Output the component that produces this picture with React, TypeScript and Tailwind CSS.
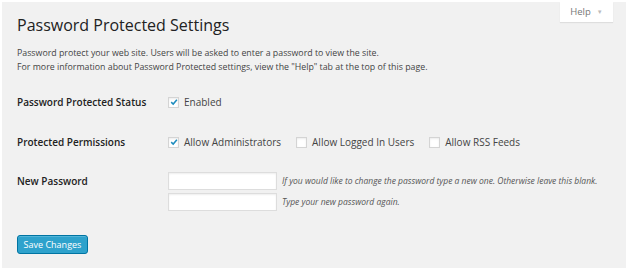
import { FC } from "react";

const Check: FC<{ checked?: boolean; label: string }> = ({ checked, label }) => (
  <label className="flex items-center gap-[5px]">
    <span className="w-[11px] h-[11px] bg-white border border-[#d4d4d4] shadow-[inset_0_1px_2px_rgba(0,0,0,0.08)] flex items-center justify-center">
      {checked && (
        <svg width="8" height="8" viewBox="0 0 10 10">
          <path d="M1.5 5.2 L4 7.6 L8.6 2.2" fill="none" stroke="#1e8cbe" strokeWidth="1.9" />
        </svg>
      )}
    </span>
    <span className="text-[10px] text-[#444]">{label}</span>
  </label>
);

const App: FC = () => {
  return (
    <div className="w-[628px] h-[272px] bg-white p-[2px] font-['Open_Sans',sans-serif]">
      <div className="relative h-[266px] w-[624px] bg-[#f1f1f1] pl-[15px] pt-[12px]">
        <div className="absolute top-0 right-[13px] w-[53px] h-[20px] bg-white shadow-[0_1px_1px_rgba(0,0,0,0.08)] flex items-center justify-center gap-[6px] text-[9.5px] text-[#777]">
          Help <span className="text-[6px] text-[#bbb]">▼</span>
        </div>
        <h1 className="text-[16px] leading-[22px] text-[#222]">Password Protected Settings</h1>
        <div className="mt-[10px] text-[8.8px] leading-[14px] text-[#444]">
          <p>Password protect your web site. Users will be asked to enter a password to view the site.</p>
          <p>For more information about Password Protected settings, view the "Help" tab at the top of this page.</p>
        </div>
        <div className="mt-[19px] flex flex-col">
          <div className="flex items-center h-[18px]">
            <div className="w-[151px] text-[10px] font-semibold text-[#222]">Password Protected Status</div>
            <Check checked label="Enabled" />
          </div>
          <div className="mt-[22px] flex items-center h-[18px] gap-[15px]">
            <div className="w-[136px] text-[10px] font-semibold text-[#222]">Protected Permissions</div>
            <Check checked label="Allow Administrators" />
            <Check label="Allow Logged In Users" />
            <Check label="Allow RSS Feeds" />
          </div>
          <div className="mt-[21px] flex">
            <div className="w-[151px] text-[10px] font-semibold text-[#222] leading-[18px]">New Password</div>
            <div className="flex flex-col gap-[3px]">
              <div className="flex items-center gap-[5px]">
                <input className="w-[109px] h-[18px] bg-white border border-[#ddd] shadow-[inset_0_1px_2px_rgba(0,0,0,0.07)]" type="password" />
                <span className="text-[8.5px] italic text-[#555]">If you would like to change the password type a new one. Otherwise leave this blank.</span>
              </div>
              <div className="flex items-center gap-[5px]">
                <input className="w-[109px] h-[18px] bg-white border border-[#ddd] shadow-[inset_0_1px_2px_rgba(0,0,0,0.07)]" type="password" />
                <span className="text-[8.5px] italic text-[#555]">Type your new password again.</span>
              </div>
            </div>
          </div>
        </div>
        <button className="block mt-[24px] w-[71px] h-[19px] bg-[#2ea2cc] border border-[#0074a2] rounded-[3px] text-white text-[9px] font-medium shadow-[inset_0_1px_0_rgba(120,200,230,0.5)]">
          Save Changes
        </button>
      </div>
    </div>
  );
};

export default App;
